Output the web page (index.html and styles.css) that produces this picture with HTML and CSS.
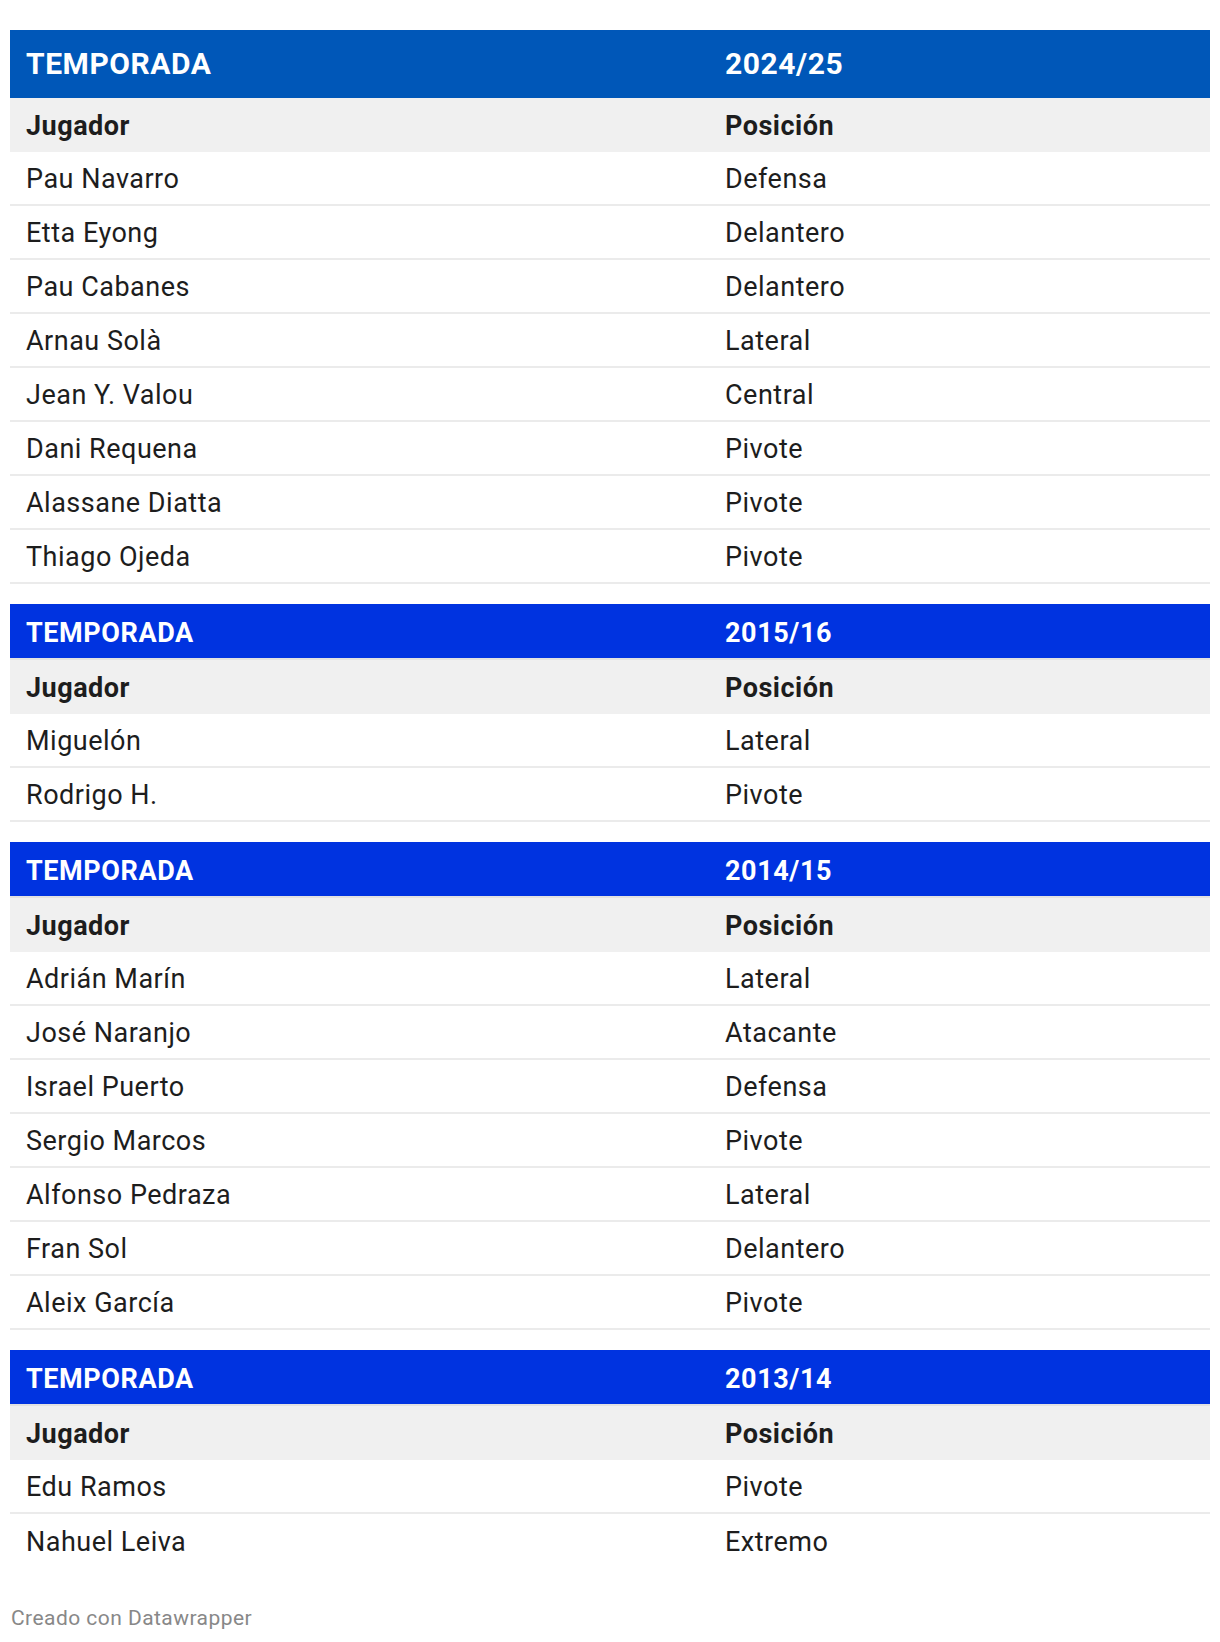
FILE: index.html
```html
<!DOCTYPE html>
<html lang="es">
<head>
<meta charset="utf-8">
<title>Temporadas</title>
<link rel="stylesheet" href="styles.css">
</head>
<body>
<div class="page">
  <section class="season season-first">
    <div class="row head"><div class="cell">TEMPORADA</div><div class="cell">2024/25</div></div>
    <div class="row sub"><div class="cell">Jugador</div><div class="cell">Posición</div></div>
    <div class="row"><div class="cell">Pau Navarro</div><div class="cell">Defensa</div></div>
    <div class="row"><div class="cell">Etta Eyong</div><div class="cell">Delantero</div></div>
    <div class="row"><div class="cell">Pau Cabanes</div><div class="cell">Delantero</div></div>
    <div class="row"><div class="cell">Arnau Solà</div><div class="cell">Lateral</div></div>
    <div class="row"><div class="cell">Jean Y. Valou</div><div class="cell">Central</div></div>
    <div class="row"><div class="cell">Dani Requena</div><div class="cell">Pivote</div></div>
    <div class="row"><div class="cell">Alassane Diatta</div><div class="cell">Pivote</div></div>
    <div class="row"><div class="cell">Thiago Ojeda</div><div class="cell">Pivote</div></div>
  </section>
  <section class="season">
    <div class="row head"><div class="cell">TEMPORADA</div><div class="cell">2015/16</div></div>
    <div class="row sub"><div class="cell">Jugador</div><div class="cell">Posición</div></div>
    <div class="row"><div class="cell">Miguelón</div><div class="cell">Lateral</div></div>
    <div class="row"><div class="cell">Rodrigo H.</div><div class="cell">Pivote</div></div>
  </section>
  <section class="season">
    <div class="row head"><div class="cell">TEMPORADA</div><div class="cell">2014/15</div></div>
    <div class="row sub"><div class="cell">Jugador</div><div class="cell">Posición</div></div>
    <div class="row"><div class="cell">Adrián Marín</div><div class="cell">Lateral</div></div>
    <div class="row"><div class="cell">José Naranjo</div><div class="cell">Atacante</div></div>
    <div class="row"><div class="cell">Israel Puerto</div><div class="cell">Defensa</div></div>
    <div class="row"><div class="cell">Sergio Marcos</div><div class="cell">Pivote</div></div>
    <div class="row"><div class="cell">Alfonso Pedraza</div><div class="cell">Lateral</div></div>
    <div class="row"><div class="cell">Fran Sol</div><div class="cell">Delantero</div></div>
    <div class="row"><div class="cell">Aleix García</div><div class="cell">Pivote</div></div>
  </section>
  <section class="season season-last">
    <div class="row head"><div class="cell">TEMPORADA</div><div class="cell">2013/14</div></div>
    <div class="row sub"><div class="cell">Jugador</div><div class="cell">Posición</div></div>
    <div class="row"><div class="cell">Edu Ramos</div><div class="cell">Pivote</div></div>
    <div class="row"><div class="cell">Nahuel Leiva</div><div class="cell">Extremo</div></div>
  </section>
  <footer class="credit">Creado con Datawrapper</footer>
</div>
</body>
</html>
```
FILE: styles.css
```css
* { box-sizing: border-box; }
html, body { margin: 0; padding: 0; background: #ffffff; }
body {
  font-family: Roboto, "Liberation Sans", Arial, sans-serif;
  color: #1d1d1d;
}
.page {
  padding: 30px 10px 0 10px;
  width: 1220px;
}
.season {
  display: flex;
  flex-direction: column;
  margin-bottom: 20px;
}
.row {
  display: grid;
  grid-template-columns: 699px 1fr;
  align-items: center;
  height: 54px;
  padding-top: 2px;
  border-bottom: 2px solid #ebebeb;
  font-size: 27px;
  letter-spacing: 0.5px;
}
.cell {
  padding-left: 16px;
  white-space: nowrap;
}
.row.head {
  background: #0033e0;
  color: #ffffff;
  font-weight: 700;
  font-size: 27px;
  letter-spacing: 0.6px;
  border-bottom: 2px solid #e2e2e2;
  height: 56px;
  padding-top: 4px;
}
.season-first .row.head {
  background: #0057b8;
  height: 68px;
  font-size: 30px;
  letter-spacing: 0.55px;
  border-bottom: none;
  padding-top: 0;
  padding-bottom: 2px;
}
.row.sub {
  background: #f0f0f0;
  font-weight: 700;
  border-bottom: none;
}
.season-last .row:last-child { border-bottom: none; }
.season-last { margin-bottom: 38px; }
.credit {
  font-size: 21px;
  letter-spacing: 0.45px;
  color: #888888;
  padding-left: 1px;
}
```
